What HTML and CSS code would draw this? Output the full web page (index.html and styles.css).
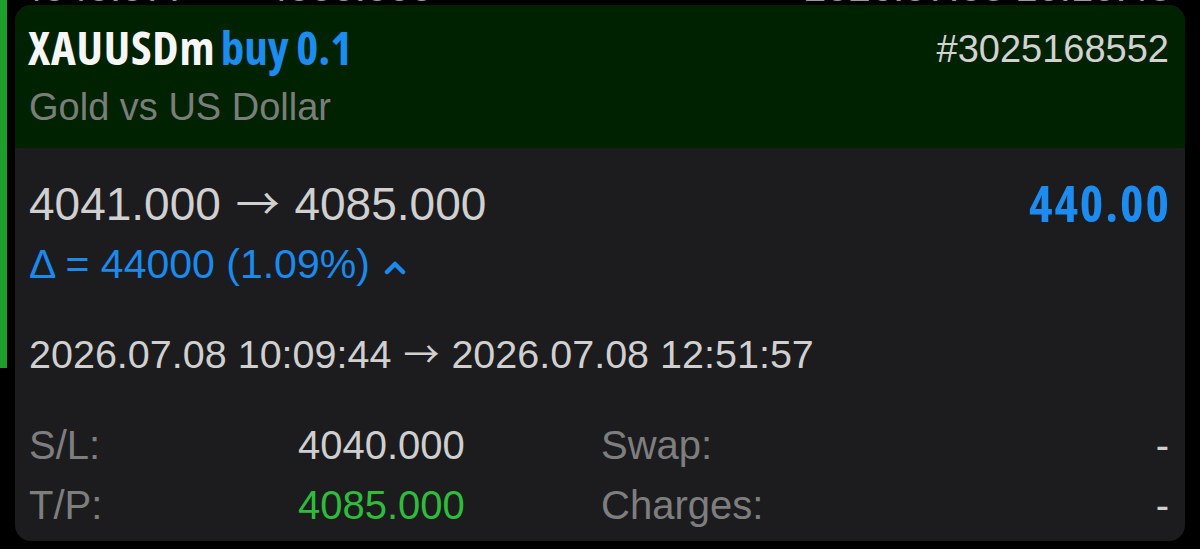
FILE: index.html
```html
<!DOCTYPE html>
<html lang="en">
<head>
<meta charset="utf-8">
<title>Position</title>
<link rel="stylesheet" href="styles.css">
</head>
<body>
<div class="screen">
  <div class="side">
    <div class="side-bar"></div>
  </div>
  <div class="main">
    <div class="prev">
      <div class="prev-line">
        <span class="prev-a">4040.077</span>
        <span class="prev-b">4000.000</span>
        <span class="prev-c">2026.07.08 10:10:48</span>
      </div>
    </div>
    <div class="card">
      <div class="card-head">
        <div class="head-left">
          <div class="title"><span class="sym">XAUUSDm</span> <span class="side-buy">buy 0.1</span></div>
          <div class="subtitle">Gold vs US Dollar</div>
        </div>
        <div class="ticket">#3025168552</div>
      </div>
      <div class="card-body">
        <div class="row-price">
          <div class="prices">4041.000 <span class="arr">→</span> 4085.000</div>
          <div class="profit">440.00</div>
        </div>
        <div class="delta">Δ = 44000 (1.09%) <svg class="chev" width="24" height="16" viewBox="0 0 24 16"><path d="M4 13 L12 5 L20 13" fill="none" stroke="#1a8aec" stroke-width="4.5" stroke-linecap="round" stroke-linejoin="round"/></svg></div>
        <div class="dates">2026.07.08 10:09:44 <span class="arr">→</span> 2026.07.08 12:51:57</div>
        <div class="grid">
          <div class="lbl">S/L:</div>
          <div class="val">4040.000</div>
          <div class="lbl">Swap:</div>
          <div class="dash">-</div>
          <div class="lbl">T/P:</div>
          <div class="val green">4085.000</div>
          <div class="lbl">Charges:</div>
          <div class="dash">-</div>
        </div>
      </div>
    </div>
  </div>
</div>
</body>
</html>
```
FILE: styles.css
```css
html, body {
  margin: 0;
  padding: 0;
  background: #000;
}
body {
  width: 1200px;
  height: 549px;
  overflow: hidden;
  font-family: "Liberation Sans", Arial, sans-serif;
}
.screen {
  display: flex;
  align-items: flex-start;
}
.side {
  width: 15px;
  flex: none;
}
.side-bar {
  width: 7px;
  height: 368px;
  background: #1f9e2e;
}
.main {
  width: 1170px;
  flex: none;
}
.prev {
  height: 5px;
  overflow: hidden;
}
.prev-line {
  margin-top: -33px;
  display: flex;
  font-size: 40px;
  line-height: 40px;
  color: #9a9a9a;
}
.prev-a { margin-left: 6px; }
.prev-b { margin-left: 78px; }
.prev-c { margin-left: auto; margin-right: 14px; }
.arr {
  font-family: "Noto Sans CJK SC", "DejaVu Sans", sans-serif;
}
.card {
  background: #1c1c1e;
  border-radius: 16px;
  overflow: hidden;
}
.card-head {
  background: #012201;
  height: 143px;
  box-sizing: border-box;
  padding: 16px 16px 0 13px;
  display: flex;
  justify-content: space-between;
  align-items: flex-start;
}
.title {
  font-family: "Open Sans", sans-serif;
  font-weight: 700;
  font-stretch: 75%;
  font-size: 47px;
  line-height: 52px;
  color: #f6f6f6;
  white-space: nowrap;
  word-spacing: -3px;
}
.sym {
  letter-spacing: 0.8px;
}
.side-buy {
  color: #1c8cf0;
  word-spacing: -1px;
}
.subtitle {
  margin-top: 12px;
  margin-left: 1px;
  font-size: 38px;
  line-height: 44px;
  color: #7a7e7a;
}
.ticket {
  margin-top: 6px;
  font-size: 38px;
  line-height: 44px;
  color: #d2d2d2;
}
.card-body {
  padding: 27px 16px 6px 14px;
}
.row-price {
  display: flex;
  justify-content: space-between;
  align-items: flex-start;
}
.prices {
  font-size: 46px;
  line-height: 52px;
  color: #d0d0d0;
  white-space: nowrap;
}
.prices .arr {
  font-size: 44px;
  margin: 0 2px;
}
.profit {
  margin-top: 2px;
  margin-right: -2px;
  font-family: "Open Sans", sans-serif;
  font-weight: 700;
  font-stretch: 75%;
  font-size: 50px;
  letter-spacing: 2px;
  line-height: 52px;
  color: #1c8cf0;
}
.delta {
  margin-top: 11px;
  font-size: 41px;
  line-height: 46px;
  color: #1a8aec;
  display: flex;
  align-items: center;
  white-space: pre;
}
.chev {
  margin-left: 2px;
  margin-top: 6px;
}
.dates {
  margin-top: 42px;
  font-size: 39.5px;
  line-height: 46px;
  color: #d0d0d0;
  white-space: nowrap;
}
.dates .arr {
  font-size: 36px;
  margin: 0 1px;
}
.grid {
  margin-top: 38px;
  display: grid;
  grid-template-columns: 269px 303px 1fr auto;
  font-size: 40px;
  line-height: 60px;
}
.lbl {
  color: #7e7e7e;
}
.val {
  color: #cfcfcf;
}
.val.green {
  color: #2ebd3a;
}
.dash {
  color: #cfcfcf;
  text-align: right;
}
```
